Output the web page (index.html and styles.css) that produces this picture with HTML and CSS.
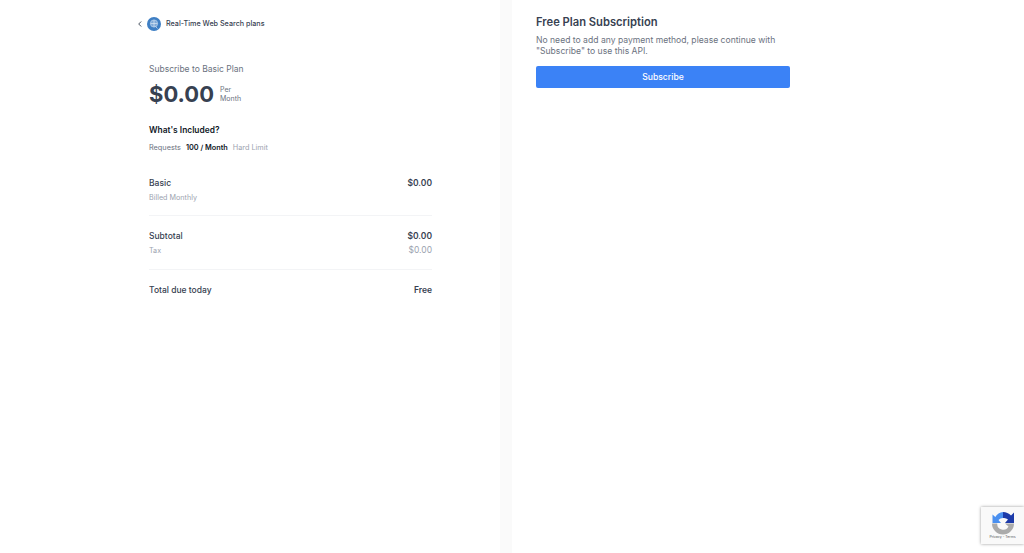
FILE: index.html
```html
<!DOCTYPE html>
<html lang="en">
<head>
<meta charset="utf-8">
<title>Subscribe</title>
<link rel="stylesheet" href="styles.css">
</head>
<body>
<div class="page">
  <main class="left">
    <header class="back">
      <svg class="chev" width="6" height="8" viewBox="0 0 6 8"><path d="M4.200 1.500 L1.700 4 L4.200 6.500" fill="none" stroke="#4b5563" stroke-width="1"/></svg>
      <svg class="logo" width="14" height="14" viewBox="0 0 14 14"><circle cx="7" cy="7" r="7" fill="#3f7fc4"/><circle cx="7" cy="6.500" r="3.600" fill="#7fa9d8" stroke="#b5cfeb" stroke-width=".8"/><path d="M7 3v7M3.600 6.500h6.800M8.500 9.500l2 2" stroke="#dbe8f5" stroke-width=".7" fill="none"/></svg>
      <span class="back-title">Real-Time Web Search plans</span>
    </header>
    <section class="summary">
      <div class="sub-label">Subscribe to Basic Plan</div>
      <div class="price-row">
        <span class="price">$0.00</span>
        <span class="period">Per<br>Month</span>
      </div>
      <h2 class="inc-title">What's Included?</h2>
      <div class="inc-row"><span class="muted">Requests</span><b>100 / Month</b><span class="faint">Hard Limit</span></div>
      <div class="line first"><div class="line-main"><span>Basic</span><span class="amt">$0.00</span></div><div class="line-sub"><span>Billed Monthly</span></div></div>
      <div class="line"><div class="line-main"><span>Subtotal</span><span class="amt">$0.00</span></div><div class="line-sub"><span>Tax</span><span class="tax">$0.00</span></div></div>
      <div class="total"><span>Total due today</span><span class="amt">Free</span></div>
    </section>
  </main>
  <div class="strip"></div>
  <aside class="right">
    <h1 class="plan-title">Free Plan Subscription</h1>
    <p class="plan-text">No need to add any payment method, please continue with "Subscribe" to use this API.</p>
    <button class="sub-btn" type="button">Subscribe</button>
  </aside>
</div>
<div class="recaptcha">
  <svg width="24" height="24" viewBox="0 0 24 24">
    <path d="M12 1V7A6 6 0 0 0 7.500 9L10 12H1.500V3.500L4.300 6A11 11 0 0 1 12 1Z" fill="#4a90f0"/>
    <path d="M12 1A11 11 0 0 1 20 4.500L23 1.500V12H14L17 8.500A6 6 0 0 0 12 7Z" fill="#1c3aa9"/>
    <path d="M1 12.500H6.200A6 6 0 0 0 17.500 15.500L14 12.500H23A11 11 0 0 1 1 12.500Z" fill="#ababab"/>
  </svg>
  <span class="rc-text">Privacy - Terms</span>
</div>
</body>
</html>
```
FILE: styles.css
```css
* { box-sizing: border-box; }
html, body { margin: 0; padding: 0; height: 100%; overflow: hidden; background: #fff; }
body { font-family: Inter, "Liberation Sans", sans-serif; color: #374151; position: relative; }
.page { display: flex; height: 553px; }
.left { width: 500px; flex: none; padding: 17px 68px 0 137px; }
.back { display: flex; align-items: center; height: 14px; }
.chev { margin-right: 4px; }
.logo { margin-right: 5px; }
.back-title { font-size: 7.200px; font-weight: 500; color: #374151; line-height: 14px; }
.summary { padding: 0 0 0 12px; }
.sub-label { margin-top: 31px; font-size: 8.500px; line-height: 14px; color: #6b7280; }
.price-row { display: flex; align-items: center; margin-top: 5px; height: 26px; }
.price { font-size: 22px; font-weight: 700; line-height: 26px; color: #374151; }
.period { margin-left: 6px; font-size: 7px; line-height: 9.500px; color: #6b7280; }
.inc-title { margin: 16px 0 0; font-size: 8.400px; line-height: 14px; font-weight: 600; color: #111827; }
.inc-row { display: flex; gap: 5px; margin-top: 5px; font-size: 7.300px; line-height: 12px; }
.inc-row b { font-weight: 600; color: #111827; }
.muted { color: #6b7280; }
.faint { color: #9ca3af; }
.line { padding-bottom: 12px; border-bottom: 1px solid #f3f4f6; margin-top: 13px; }
.line.first { margin-top: 22px; padding-bottom: 11px; }
.line-main { display: flex; justify-content: space-between; font-size: 8.500px; line-height: 14px; font-weight: 500; color: #374151; }
.amt { font-weight: 600; color: #374151; }
.line-sub { display: flex; justify-content: space-between; margin-top: 1px; font-size: 7.200px; line-height: 13px; color: #9ca3af; }
.tax { font-size: 8.500px; }
.total { display: flex; justify-content: space-between; margin-top: 13px; font-size: 8.500px; line-height: 14px; font-weight: 500; color: #374151; }
.strip { width: 12px; flex: none; background: #fafafa; }
.right { flex: 1; padding: 15px 0 0 24px; }
.plan-title { margin: 0; font-size: 11.200px; line-height: 15px; font-weight: 600; color: #374151; }
.plan-text { margin: 5px 0 0; width: 254px; font-size: 8.600px; line-height: 10.500px; color: #6b7280; }
.sub-btn { display: block; margin-top: 10px; width: 254px; height: 22px; border: 0; border-radius: 2px; background: #3b82f6; color: #fff; font: 500 8.600px Inter, sans-serif; }
.recaptcha { position: absolute; right: 0; top: 507px; width: 43px; height: 37px; background: #f9f9f9; box-shadow: 0 0 3px rgba(0,0,0,.4); display: flex; flex-direction: column; align-items: center; padding-top: 4px; }
.rc-text { font-size: 3.500px; line-height: 5px; color: #555; }
```
